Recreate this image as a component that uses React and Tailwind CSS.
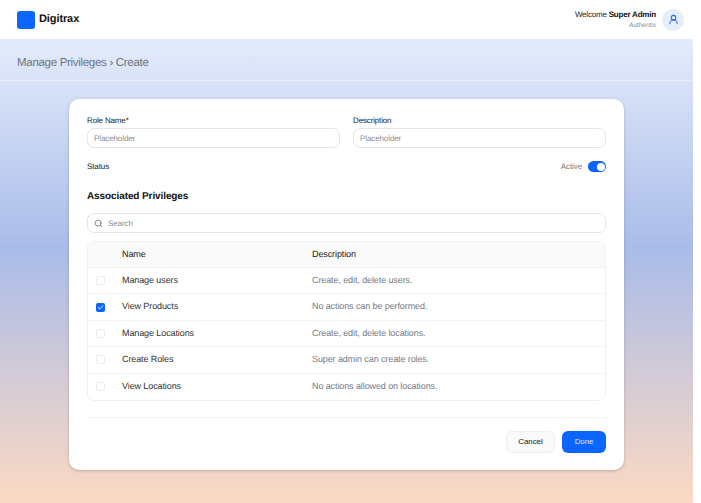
import React from "react";
import { Search, UserRound, Check } from "lucide-react";

const privileges = [
  { name: "Manage users", desc: "Create, edit, delete users.", checked: false },
  { name: "View Products", desc: "No actions can be performed.", checked: true },
  { name: "Manage Locations", desc: "Create, edit, delete locations.", checked: false },
  { name: "Create Roles", desc: "Super admin can create roles.", checked: false },
  { name: "View Locations", desc: "No actions allowed on locations.", checked: false },
];

const Field = ({ label }) => (
  <div className="flex-1">
    <div className="h-[14px] text-[8px] leading-[13px] tracking-[-0.15px] text-[#222]">{label}</div>
    <div className="flex h-5 items-center rounded-[7px] border border-[#e5e5e8] px-[6px] pt-[1px] text-[8px] tracking-[-0.1px] text-[#8b8b94]">
      Placeholder
    </div>
  </div>
);

const App = () => {
  return (
    <div className="flex h-[503px] w-[701px] flex-col overflow-hidden bg-white font-['Liberation_Sans',sans-serif] [text-rendering:geometricPrecision]">
      {/* Header */}
      <header className="flex h-[39px] items-center justify-between pl-[17px] pr-[17px]">
        <div className="flex items-center gap-[4px]">
          <div className="h-[18px] w-[18px] rounded-[3px] bg-[#0a66ff]" />
          <span className="text-[11px] font-bold tracking-[-0.1px] text-[#111]">Digitrax</span>
        </div>
        <div className="flex items-center gap-[6px]">
          <div className="text-right">
            <div className="text-[8px] leading-[11px] tracking-[-0.2px] text-[#222]">
              Welcome <span className="font-bold text-[#111]">Super Admin</span>
            </div>
            <div className="mt-[1px] text-[6.5px] leading-[9px] text-[#8b8b94]">Authentix</div>
          </div>
          <div className="flex h-[22px] w-[22px] items-center justify-center rounded-full bg-[#e6eefc]">
            <UserRound size={11} strokeWidth={2.2} className="text-[#1b6ff5]" />
          </div>
        </div>
      </header>

      {/* Page body */}
      <main className="h-[464px] w-[693px] bg-[linear-gradient(180deg,#e4ecfb_0%,#a9bce9_45%,#fcd9c3_100%)]">
        <div className="flex h-[42px] items-center border-b border-[#e9effb] pl-[17px] pt-[8px] text-[11.5px] tracking-[-0.3px] text-[#6f7280]">
          Manage Privileges › Create
        </div>

        <div className="ml-[69px] mt-[18px] h-[371px] w-[555px] rounded-[10px] bg-white px-[18px] pt-[15px] shadow-[0_1px_3px_rgba(80,60,60,0.3)]">
          <div className="flex gap-[13px]">
            <Field label="Role Name*" />
            <Field label="Description" />
          </div>

          <div className="mt-[11px] flex h-[15px] items-center justify-between">
            <span className="text-[8px] tracking-[-0.1px] text-[#222]">Status</span>
            <div className="flex items-center gap-[6px]">
              <span className="text-[8px] tracking-[-0.1px] text-[#777a85]">Active</span>
              <div className="flex h-[11px] w-[18px] items-center justify-end rounded-full bg-[#0a66ff] pr-[1px]">
                <div className="h-[8px] w-[8px] rounded-full bg-white" />
              </div>
            </div>
          </div>

          <h2 className="mt-[16px] text-[10px] font-bold leading-[14px] tracking-[-0.1px] text-[#111]">Associated Privileges</h2>

          <div className="mt-[9px] flex h-5 items-center gap-[5px] rounded-[7px] border border-[#e5e5e8] px-[6px] text-[8px] tracking-[-0.1px] text-[#8b8b94]">
            <Search size={9} className="text-[#666]" />
            <span className="pt-[1px]">Search</span>
          </div>

          {/* Table */}
          <div className="mt-[8px] overflow-hidden rounded-[7px] border border-[#f0f0f2]">
            <div className="flex h-[26px] items-center border-b border-[#f0f0f2] bg-[#fafafa] text-[9px] tracking-[-0.1px] text-[#222]">
              <div className="w-[34px]" />
              <div className="w-[190px]">Name</div>
              <div>Description</div>
            </div>
            {privileges.map((p, i) => (
              <div
                key={p.name}
                className={`flex h-[26.4px] items-center text-[9px] tracking-[-0.1px] ${i < privileges.length - 1 ? "border-b border-[#f3f3f5]" : ""}`}
              >
                <div className="flex w-[34px] justify-center pr-[9px]">
                  {p.checked ? (
                    <div className="flex h-[9px] w-[9px] items-center justify-center rounded-[2px] bg-[#0a66ff]">
                      <Check size={7} strokeWidth={3} className="text-white" />
                    </div>
                  ) : (
                    <div className="h-[9px] w-[9px] rounded-[2px] border border-[#ececee]" />
                  )}
                </div>
                <div className="w-[190px] text-[#333]">{p.name}</div>
                <div className="text-[#777a85]">{p.desc}</div>
              </div>
            ))}
          </div>

          <div className="mt-[16px] border-t border-[#f3f3f5]" />

          <div className="mt-[13px] flex justify-end gap-[7px]">
            <button className="h-[22px] w-[49px] rounded-[6px] border border-[#efeff1] bg-[#fafafa] text-[8px] tracking-[-0.1px] text-[#222]">
              Cancel
            </button>
            <button className="h-[22px] w-[44px] rounded-[6px] bg-[#0a66ff] text-[8px] tracking-[-0.1px] text-[#dbe7ff]">
              Done
            </button>
          </div>
        </div>
      </main>
    </div>
  );
};

export default App;
